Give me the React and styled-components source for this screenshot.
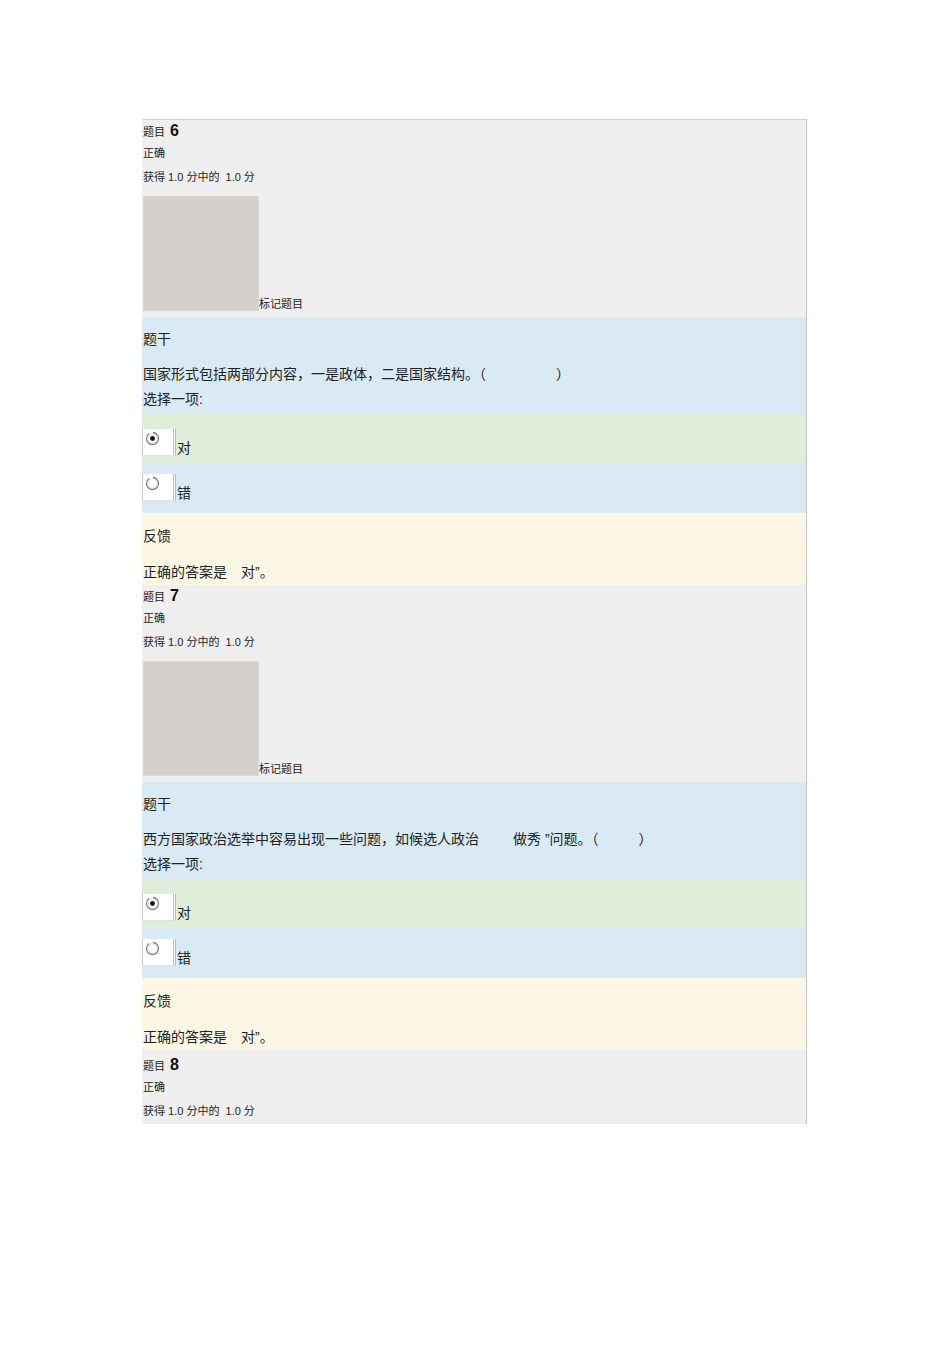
import React from 'react';
import styled, { createGlobalStyle } from 'styled-components';

const GlobalStyle = createGlobalStyle`
  html, body {
    margin: 0;
    padding: 0;
    background: #fff;
  }
  body {
    font-family: 'Liberation Sans', 'Noto Sans CJK SC', sans-serif;
    color: #222;
  }
`;

const questions = [
  {
    no: 6,
    stem: [
      '国家形式包括两部分内容，一是政体，二是国家结构。（',
      { gap: 70 },
      '）',
    ],
    picked: 0,
  },
  {
    no: 7,
    stem: [
      '西方国家政治选举中容易出现一些问题，如候选人政治',
      { gap: 34 },
      '做秀 ”问题。（',
      { gap: 40 },
      '）',
    ],
    picked: 0,
  },
];

function Radio({ checked }) {
  return (
    <svg width="15" height="15" viewBox="0 0 15 15">
      <circle cx="7.5" cy="7.5" r="6" fill="#fff" stroke="#7d7d7d" strokeWidth="1.3" strokeDasharray="24 4" />
      <circle cx="7.5" cy="7.5" r="4.8" fill="none" stroke="#d4d4d4" strokeWidth="0.9" />
      {checked && <circle cx="7.5" cy="7.5" r="2.4" fill="#111" />}
    </svg>
  );
}

function Info({ no, flag, last }) {
  return (
    <InfoBlock $last={last}>
      <QNo>
        题目<Num>{no}</Num>
      </QNo>
      <Small $top={1}>正确</Small>
      <Small $top={4}>获得 1.0 分中的  1.0 分</Small>
      {flag && (
        <FlagRow>
          <FlagImg />
          <Small as="span" $h={14}>标记题目</Small>
        </FlagRow>
      )}
    </InfoBlock>
  );
}

function Question({ q }) {
  return (
    <>
      <Info no={q.no} flag />
      <Stem>
        <Text>题干</Text>
        <Text $top={15}>
          {q.stem.map((part, i) =>
            typeof part === 'string' ? <span key={i}>{part}</span> : <Gap key={i} $w={part.gap} />
          )}
        </Text>
        <Text $top={5}>选择一项:</Text>
      </Stem>
      {['对', '错'].map((label, i) => (
        <Answer key={label} $tone={i === q.picked ? 'green' : 'blue'} $first={i === 0}>
          <RadioBox>
            <Radio checked={i === q.picked} />
          </RadioBox>
          <AnswerLabel>{label}</AnswerLabel>
        </Answer>
      ))}
      <Feedback>
        <Text>反馈</Text>
        <Text $top={16}>
          正确的答案是<Gap $w={14} />对”。
        </Text>
      </Feedback>
    </>
  );
}

export default function App() {
  return (
    <Page>
      <GlobalStyle />
      <Sheet>
        {questions.map((q) => (
          <Question key={q.no} q={q} />
        ))}
        <Info no={8} last />
      </Sheet>
    </Page>
  );
}

const Page = styled.div`
  width: 950px;
  min-height: 1345px;
  padding-top: 119px;
  box-sizing: border-box;
`;

const Sheet = styled.div`
  margin-left: 142px;
  width: 664px;
  border-top: 1px solid #cfcfcf;
  border-right: 1px solid #c4c4c4;
  display: flex;
  flex-direction: column;
`;

const InfoBlock = styled.div`
  background: #efefef;
  padding: ${(p) => (p.$last ? '4px 0 3px 1px' : '0 0 6px 1px')};
  display: flex;
  flex-direction: column;
`;

const QNo = styled.div`
  height: 22px;
  display: flex;
  align-items: center;
  font-size: 11px;
`;

const Num = styled.span`
  font-size: 16px;
  font-weight: 700;
  margin-left: 5px;
  color: #111;
`;

const Small = styled.div`
  height: ${(p) => p.$h || 20}px;
  margin-top: ${(p) => p.$top || 0}px;
  display: flex;
  align-items: center;
  font-size: 11px;
  line-height: 14px;
  white-space: pre;
`;

const FlagRow = styled.div`
  margin-top: 9px;
  display: flex;
  align-items: flex-end;
`;

const FlagImg = styled.div`
  width: 116px;
  height: 115px;
  background: #d4d0cb;
  border: 1px solid #dcd9d5;
  box-sizing: border-box;
`;

const Stem = styled.div`
  background: #d9eaf5;
  padding: 11px 0 6px 1px;
  display: flex;
  flex-direction: column;
`;

const Text = styled.div`
  height: 20px;
  margin-top: ${(p) => p.$top || 0}px;
  display: flex;
  align-items: center;
  font-size: 14px;
  white-space: pre;
`;

const Gap = styled.span`
  display: inline-block;
  width: ${(p) => p.$w}px;
`;

const Answer = styled.div`
  background: ${(p) => (p.$tone === 'green' ? '#dfeed8' : '#d9eaf5')};
  padding: ${(p) => (p.$first ? '15px 0 7px 0' : '11px 0 12px 0')};
  display: flex;
  align-items: flex-end;
`;

const RadioBox = styled.div`
  width: 34px;
  height: 27px;
  box-sizing: border-box;
  background: #fff;
  border-left: 1px solid #c8cbc4;
  border-right: 3px double #b9bcb6;
  border-bottom: 1px solid #e2e2e2;
  padding: 2px 0 0 2px;
`;

const AnswerLabel = styled.span`
  font-size: 14px;
  line-height: 16px;
  margin-left: 1px;
`;

const Feedback = styled.div`
  background: #fcf7e4;
  padding: 12px 0 4px 1px;
  display: flex;
  flex-direction: column;
`;
